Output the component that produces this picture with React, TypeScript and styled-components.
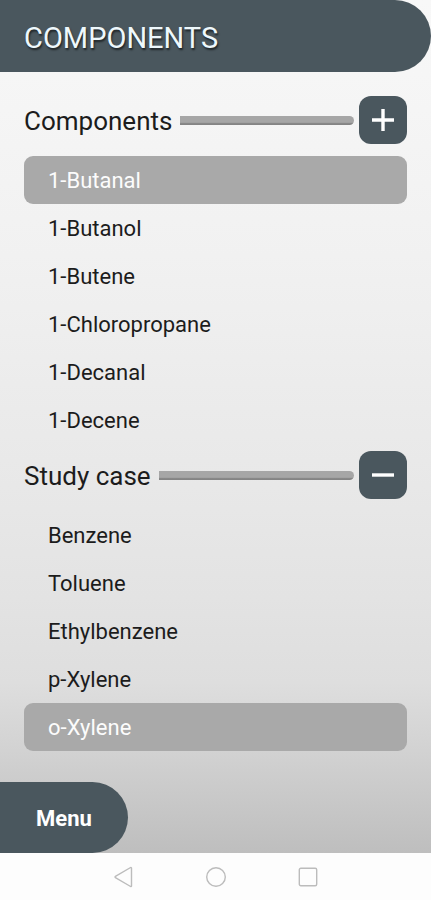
import React, { useState } from "react";
import styled, { createGlobalStyle } from "styled-components";

const slate = "#4a575e";

const GlobalStyle = createGlobalStyle`
  *, *::before, *::after {
    box-sizing: border-box;
  }
  body {
    margin: 0;
    font-family: Roboto, "Liberation Sans", sans-serif;
    color: #1c1c1c;
  }
  button {
    border: 0;
    padding: 0;
    font: inherit;
    cursor: pointer;
  }
`;

const Screen = styled.div`
  display: flex;
  flex-direction: column;
  min-height: 100vh;
  background: #fdfdfd;
`;

const Page = styled.div`
  flex: 1;
  display: flex;
  flex-direction: column;
  background: linear-gradient(
    to bottom,
    #f8f8f8 0%,
    #f1f1f1 30%,
    #e8e8e8 57%,
    #e3e3e3 70%,
    #dedede 80%,
    #d2d2d2 88%,
    #bebebe 100%
  );
`;

const TitleBar = styled.header`
  display: flex;
  align-items: center;
  height: 72px;
  padding: 4px 24px 0;
  border-radius: 0 36px 36px 0;
  background: ${slate};
`;

const Title = styled.h1`
  margin: 0;
  font-size: 29px;
  font-weight: 400;
  line-height: 36px;
  color: #eef8fc;
  text-shadow: 1px 2px 2px rgba(0, 0, 0, 0.6);
`;

const Content = styled.main`
  display: flex;
  flex-direction: column;
  gap: 7px;
  padding: 24px 24px 31px;
`;

const Section = styled.section`
  display: flex;
  flex-direction: column;
  gap: 12px;
`;

const SectionHeader = styled.div`
  display: flex;
  align-items: center;
  height: 48px;
`;

const SectionTitle = styled.h2`
  margin: 0 8px 0 0;
  padding-top: 2px;
  font-size: 26px;
  font-weight: 400;
  line-height: 32px;
`;

const Rule = styled.div`
  flex: 1;
  height: 9px;
  margin-right: 5px;
  border-radius: 0 5px 5px 0;
  background: linear-gradient(to bottom, #a6a6a6 70%, #848484 85%);
`;

const SquareButton = styled.button`
  display: flex;
  align-items: center;
  justify-content: center;
  width: 48px;
  height: 48px;
  border-radius: 12px;
  background: ${slate};
`;

const List = styled.ul`
  margin: 0;
  padding: 0;
  list-style: none;
`;

const Row = styled.button<{ $selected: boolean }>`
  display: block;
  width: 100%;
  height: 48px;
  padding: 2px 24px 0;
  border-radius: 9px;
  font-size: 22px;
  line-height: 28px;
  text-align: left;
  background: ${(p) => (p.$selected ? "#a9a9a9" : "transparent")};
  color: ${(p) => (p.$selected ? "#fcfcfc" : "#1c1c1c")};
`;

const Footer = styled.footer`
  display: flex;
  margin-top: auto;
`;

const MenuButton = styled.button`
  height: 71px;
  padding: 2px 36px 0;
  border-radius: 0 36px 36px 0;
  background: ${slate};
  color: #ffffff;
  font-size: 22px;
  font-weight: 700;
  line-height: 28px;
`;

const SystemBar = styled.nav`
  display: flex;
  align-items: center;
  justify-content: center;
  gap: 68px;
  height: 47px;
`;

const SystemButton = styled.button`
  display: flex;
  width: 24px;
  height: 24px;
  background: transparent;
`;

function SymbolIcon({ d }: { d: string }) {
  return (
    <svg width="24" height="24" viewBox="0 0 24 24" fill="none" stroke="#ffffff" strokeWidth="3.4" aria-hidden="true">
      <path d={d} />
    </svg>
  );
}

function NavIcon({ children }: { children: React.ReactNode }) {
  return (
    <svg width="24" height="24" viewBox="0 0 24 24" fill="none" stroke="#bcbcbc" strokeWidth="1.4" strokeLinejoin="round" aria-hidden="true">
      {children}
    </svg>
  );
}

const components = ["1-Butanal", "1-Butanol", "1-Butene", "1-Chloropropane", "1-Decanal", "1-Decene"];
const studyCase = ["Benzene", "Toluene", "Ethylbenzene", "p-Xylene", "o-Xylene"];

interface PickerProps {
  title: string;
  items: string[];
  initial: string;
  action: string;
  icon: string;
}

function Picker({ title, items, initial, action, icon }: PickerProps) {
  const [selected, setSelected] = useState(initial);
  return (
    <Section>
      <SectionHeader>
        <SectionTitle>{title}</SectionTitle>
        <Rule />
        <SquareButton type="button" aria-label={action}>
          <SymbolIcon d={icon} />
        </SquareButton>
      </SectionHeader>
      <List>
        {items.map((item) => (
          <li key={item}>
            <Row
              type="button"
              $selected={item === selected}
              aria-pressed={item === selected}
              onClick={() => setSelected(item)}
            >
              {item}
            </Row>
          </li>
        ))}
      </List>
    </Section>
  );
}

export default function App() {
  return (
    <Screen>
      <GlobalStyle />
      <Page>
        <TitleBar>
          <Title>COMPONENTS</Title>
        </TitleBar>
        <Content>
          <Picker
            title="Components"
            items={components}
            initial="1-Butanal"
            action="Add component"
            icon="M12 1v22M1 12h22"
          />
          <Picker
            title="Study case"
            items={studyCase}
            initial="o-Xylene"
            action="Remove component"
            icon="M1 12h22"
          />
        </Content>
        <Footer>
          <MenuButton type="button">Menu</MenuButton>
        </Footer>
      </Page>
      <SystemBar>
        <SystemButton type="button" aria-label="Back">
          <NavIcon>
            <path d="M19.5 3v18a.6.6 0 0 1-.9.5L3.4 12.6a.7.7 0 0 1 0-1.2L18.6 2.5a.6.6 0 0 1 .9.5z" />
          </NavIcon>
        </SystemButton>
        <SystemButton type="button" aria-label="Home">
          <NavIcon>
            <circle cx="12" cy="12" r="9.3" />
          </NavIcon>
        </SystemButton>
        <SystemButton type="button" aria-label="Recent apps">
          <NavIcon>
            <rect x="3.3" y="3.3" width="17.4" height="17.4" rx="1.5" />
          </NavIcon>
        </SystemButton>
      </SystemBar>
    </Screen>
  );
}
